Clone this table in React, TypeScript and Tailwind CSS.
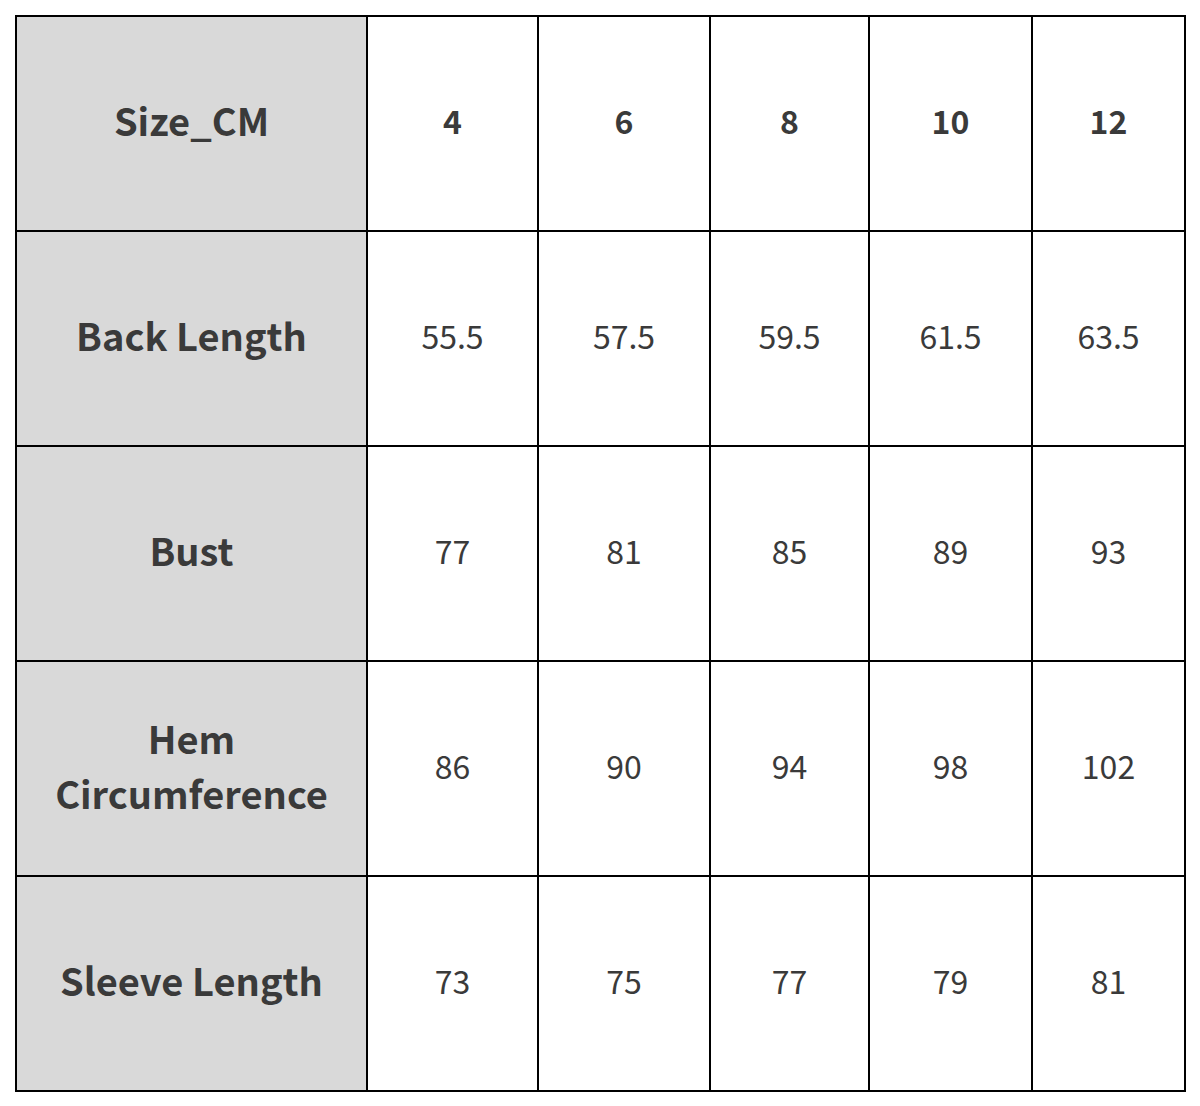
const sizes = ["4", "6", "8", "10", "12"];

const rows: { label: string[]; values: string[] }[] = [
  { label: ["Back Length"], values: ["55.5", "57.5", "59.5", "61.5", "63.5"] },
  { label: ["Bust"], values: ["77", "81", "85", "89", "93"] },
  { label: ["Hem", "Circumference"], values: ["86", "90", "94", "98", "102"] },
  { label: ["Sleeve Length"], values: ["73", "75", "77", "79", "81"] },
];

const colWidths = ["w-[351px]", "w-[171px]", "w-[172px]", "w-[159px]", "w-[163px]", "w-[153px]"];

export default function App() {
  return (
    <div className="bg-white w-[1200px] h-[1106px] pt-[15px] pl-[15px] font-['Noto_Sans_CJK_SC','Noto_Sans',sans-serif] text-[#3a3a3a]">
      <table className="border-collapse border-2 border-black table-fixed w-[1169px]">
        <colgroup>
          {colWidths.map((w, i) => (
            <col key={i} className={w} />
          ))}
        </colgroup>
        <tbody>
          <tr className="h-[215px]">
            <th className="border-2 border-black bg-[#d9d9d9] text-[38px] font-bold pb-[8px]">Size_CM</th>
            {sizes.map((s) => (
              <th key={s} className="border-2 border-black text-[32px] font-bold pb-[8px]">
                {s}
              </th>
            ))}
          </tr>
          {rows.map((r) => (
            <tr key={r.label.join(" ")} className="h-[215px]">
              <th className="border-2 border-black bg-[#d9d9d9] text-[38px] font-bold leading-[55px] pb-[8px]">
                {r.label.map((l) => (
                  <div key={l}>{l}</div>
                ))}
              </th>
              {r.values.map((v, i) => (
                <td key={i} className="border-2 border-black text-center text-[32px] font-normal pb-[8px]">
                  {v}
                </td>
              ))}
            </tr>
          ))}
        </tbody>
      </table>
    </div>
  );
}
